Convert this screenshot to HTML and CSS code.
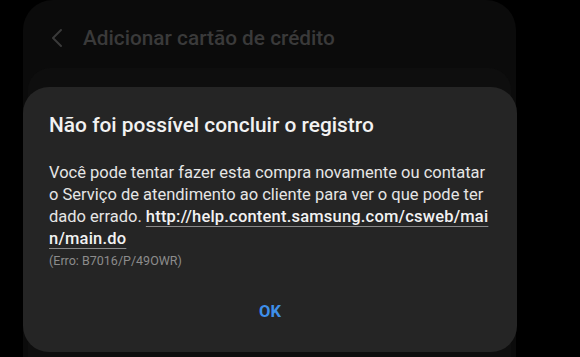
FILE: index.html
```
<!DOCTYPE html>
<html lang="pt">
<head>
<meta charset="utf-8">
<title>Adicionar cartão de crédito</title>
<link rel="stylesheet" href="styles.css">
</head>
<body>
<div class="screen">
  <div class="app-card">
    <div class="header">
      <svg class="back" width="14" height="20" viewBox="0 0 14 20" aria-hidden="true">
        <path d="M11 2 L3 10 L11 18" fill="none" stroke="#3a3a3a" stroke-width="2" stroke-linecap="round" stroke-linejoin="round"/>
      </svg>
      <span class="header-title">Adicionar cartão de crédito</span>
    </div>
    <div class="section"></div>
  </div>

  <div class="dialog" role="dialog">
    <h1 class="dialog-title">Não foi possível concluir o registro</h1>
    <p class="dialog-body">Você pode tentar fazer esta compra novamente ou contatar o Serviço de atendimento ao cliente para ver o que pode ter dado errado. <a class="link" href="#">http://help.content.samsung.com/csweb/main/main.do</a></p>
    <p class="dialog-code">(Erro: B7016/P/49OWR)</p>
    <div class="dialog-actions">
      <button class="btn-ok" type="button">OK</button>
    </div>
  </div>
</div>
</body>
</html>
```
FILE: styles.css
```
html, body {
  margin: 0;
  padding: 0;
  background: #000;
}

.screen {
  position: relative;
  width: 580px;
  height: 357px;
  overflow: hidden;
  background: #000;
  font-family: Roboto, "Noto Sans", "Liberation Sans", sans-serif;
}

.app-card {
  margin-left: 23px;
  width: 493px;
  height: 357px;
  background: #0b0b0b;
  border-radius: 30px 30px 0 0;
  display: flex;
  flex-direction: column;
}

.header {
  height: 68px;
  display: flex;
  align-items: center;
  padding-left: 27px;
  padding-top: 8px;
  gap: 19px;
  box-sizing: border-box;
}

.back {
  display: block;
}

.header-title {
  color: #3a3a3a;
  font-size: 20.8px;
  font-weight: 500;
}

.section {
  flex: 1;
  margin: 0 5px;
  background: #0e0e0e;
  border-radius: 22px 22px 0 0;
}

.dialog {
  position: absolute;
  left: 23px;
  top: 87px;
  width: 494px;
  height: 265px;
  box-sizing: border-box;
  background: #252525;
  border-radius: 26px;
  padding: 26px 26px 30px 26px;
  display: flex;
  flex-direction: column;
}

.dialog-title {
  margin: 0;
  font-size: 20.9px;
  line-height: 24px;
  font-weight: 500;
  color: #f2f2f2;
}

.dialog-body {
  margin: 25px 0 0 0;
  font-size: 16.5px;
  line-height: 22px;
  color: #e6e6e6;
}

.link {
  color: #f2f2f2;
  font-weight: 500;
  letter-spacing: 0.2px;
  text-decoration: underline;
  text-decoration-color: #8a8a8a;
  text-decoration-thickness: 1px;
  text-underline-offset: 4px;
  word-break: break-all;
}

.dialog-code {
  margin: 3px 0 0 0;
  font-size: 12.5px;
  line-height: 16px;
  color: #8c8c8c;
}

.dialog-actions {
  margin-top: auto;
  display: flex;
  justify-content: center;
}

.btn-ok {
  background: none;
  border: 0;
  padding: 0;
  font-family: inherit;
  font-size: 16.5px;
  line-height: 20px;
  font-weight: 700;
  color: #3e8fea;
}
```
